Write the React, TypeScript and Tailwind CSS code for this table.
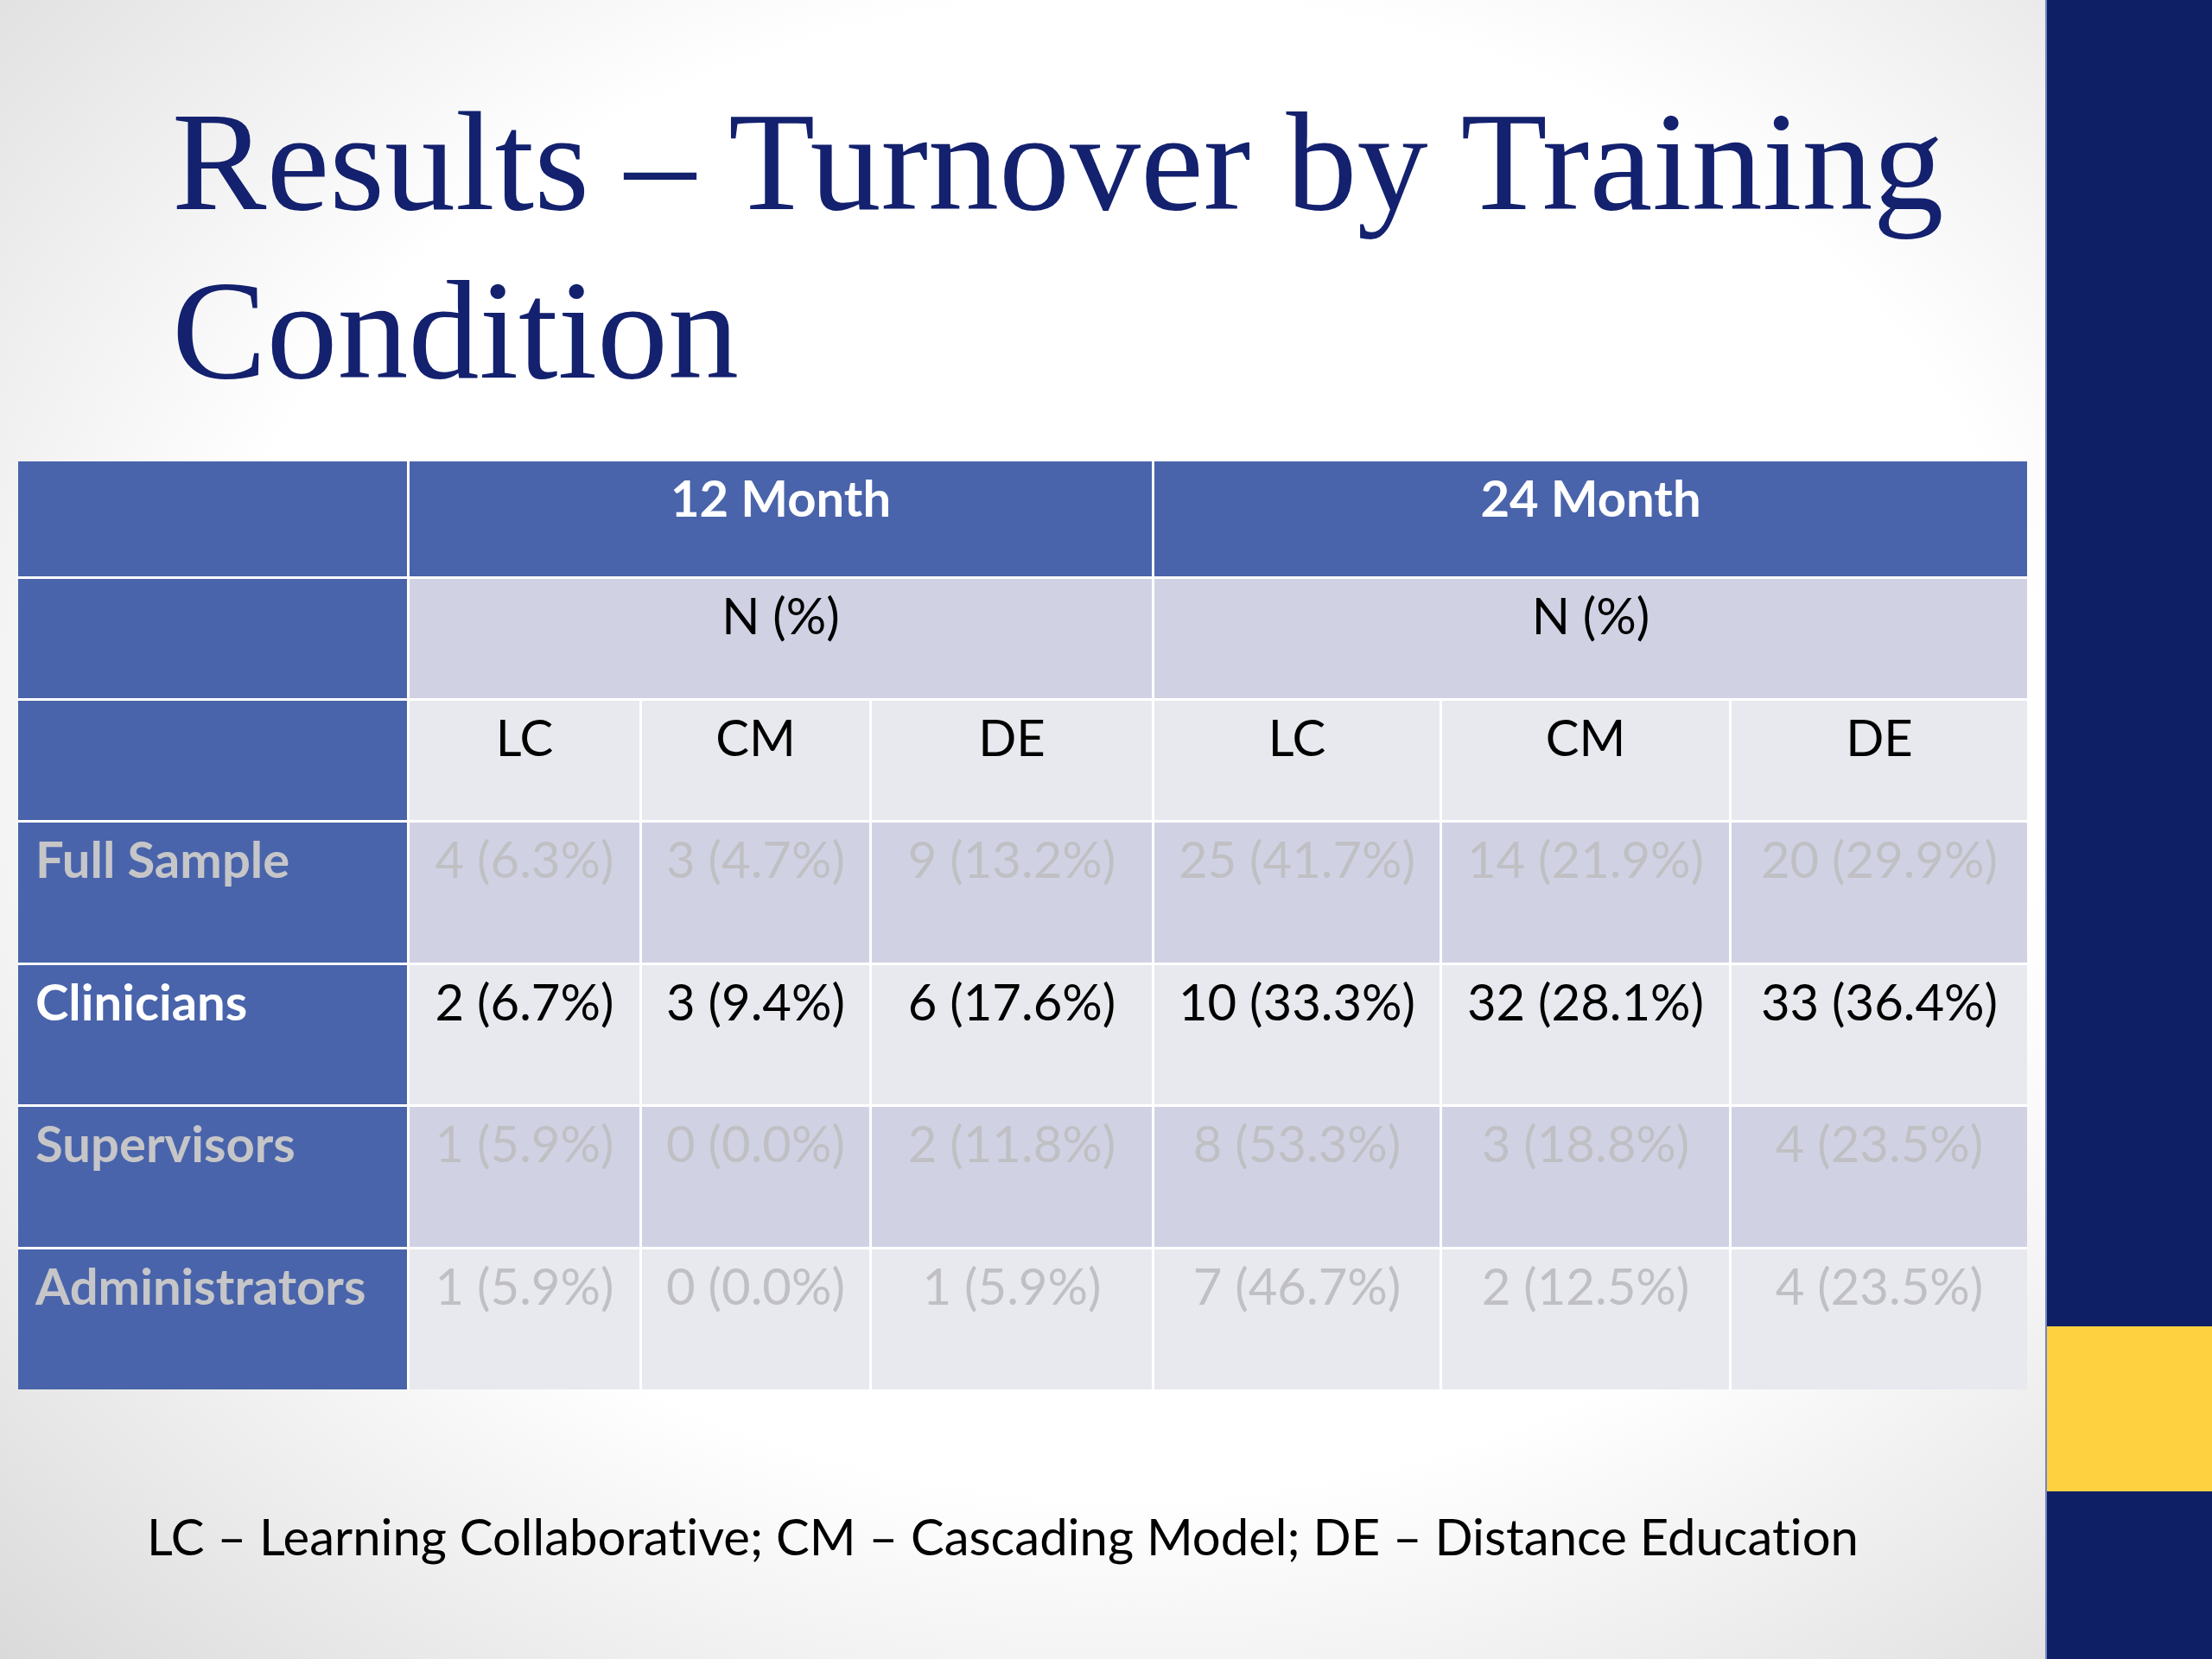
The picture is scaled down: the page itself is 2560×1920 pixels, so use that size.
const body = "font-['Lato','Open_Sans',sans-serif] [font-variant-ligatures:none]";

type Row = {
  label: string;
  labelTone: "dim" | "bright";
  tone: "lav" | "light";
  values: string[];
};

const rows: Row[] = [
  { label: "Full Sample", labelTone: "dim", tone: "lav", values: ["4 (6.3%)", "3 (4.7%)", "9 (13.2%)", "25 (41.7%)", "14 (21.9%)", "20 (29.9%)"] },
  { label: "Clinicians", labelTone: "bright", tone: "light", values: ["2 (6.7%)", "3 (9.4%)", "6 (17.6%)", "10 (33.3%)", "32 (28.1%)", "33 (36.4%)"] },
  { label: "Supervisors", labelTone: "dim", tone: "lav", values: ["1 (5.9%)", "0 (0.0%)", "2 (11.8%)", "8 (53.3%)", "3 (18.8%)", "4 (23.5%)"] },
  { label: "Administrators", labelTone: "dim", tone: "light", values: ["1 (5.9%)", "0 (0.0%)", "1 (5.9%)", "7 (46.7%)", "2 (12.5%)", "4 (23.5%)"] },
];

const codes = ["LC", "CM", "DE", "LC", "CM", "DE"];

function BlueCell({ children, tone = "bright" }: { children?: React.ReactNode; tone?: "dim" | "bright" }) {
  return (
    <div
      className={`bg-[#4964ab] pl-[20px] pt-[7px] font-bold text-left ${tone === "dim" ? "text-[#c6c6c8]" : "text-white"}`}
    >
      {children}
    </div>
  );
}

export default function App() {
  return (
    <div className="flex w-[2560px] h-[1920px] overflow-hidden">
      <div className="w-[2367px] h-full flex flex-col bg-[radial-gradient(ellipse_at_55%_45%,#ffffff_58%,#dadada_100%)]">
        <h1 className="pl-[199px] pt-[89px] text-[164px] leading-[195px] text-[#13216e] font-['Liberation_Serif','Times_New_Roman',serif]">
          Results – Turnover by Training
          <br />
          Condition
        </h1>

        <div
          className={`${body} ml-[21px] mt-[55px] w-[2325px] grid grid-cols-[450px_266px_263px_324px_330px_332px_342px] grid-rows-[133px_138px_138px_162px_161px_162px_162px] gap-[3px] bg-white text-[58px] leading-[70px] text-center`}
        >
          <BlueCell />
          <div className="col-span-3 bg-[#4964ab] pt-[7px] font-bold text-white">12 Month</div>
          <div className="col-span-3 bg-[#4964ab] pt-[7px] font-bold text-white">24 Month</div>

          <BlueCell />
          <div className="col-span-3 bg-[#d0d2e4] pt-[7px] text-black">N (%)</div>
          <div className="col-span-3 bg-[#d0d2e4] pt-[7px] text-black">N (%)</div>

          <BlueCell />
          {codes.map((c, i) => (
            <div key={i} className="bg-[#e8e9ef] pt-[7px] text-black">
              {c}
            </div>
          ))}

          {rows.map((r) => (
            <>
              <BlueCell key={r.label} tone={r.labelTone}>
                {r.label}
              </BlueCell>
              {r.values.map((v, i) => (
                <div
                  key={r.label + i}
                  className={`pt-[7px] ${r.tone === "lav" ? "bg-[#d0d2e4]" : "bg-[#e8e9ef]"} ${
                    r.labelTone === "bright" ? "text-black" : "text-[#c0c0c4]"
                  }`}
                >
                  {v}
                </div>
              ))}
            </>
          ))}
        </div>

        <p className={`${body} pl-[170px] mt-[135px] text-[58px] leading-[70px] text-black`}>
          LC – Learning Collaborative; CM – Cascading Model; DE – Distance Education
        </p>
      </div>

      <div className="w-[193px] h-full flex flex-col bg-[#0e1f66] border-l-2 border-[#7485c0]">
        <div className="h-[1535px]" />
        <div className="h-[191px] bg-[#fdd13f]" />
      </div>
    </div>
  );
}
